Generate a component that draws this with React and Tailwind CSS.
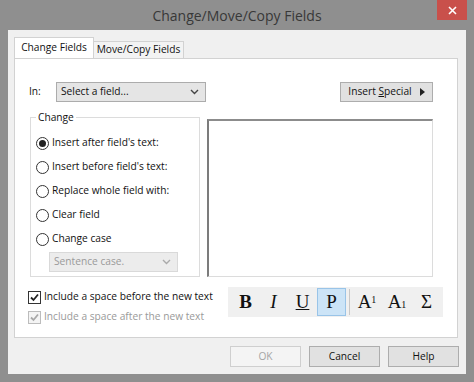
import React from "react";

const F = "font-['Open_Sans',sans-serif]";

function Radio({ checked, label }) {
  return (
    <div className="flex items-center h-[20px]">
      <span className="w-[13px] h-[13px] rounded-full border border-[#333] bg-white flex items-center justify-center">
        {checked && <span className="w-[7px] h-[7px] rounded-full bg-[#222]" />}
      </span>
      <span className="ml-[3px] text-[10.2px] text-[#111] whitespace-nowrap">{label}</span>
    </div>
  );
}

function Check({ disabled, label }) {
  const c = disabled ? "#a8a8a8" : "#222";
  return (
    <div className="flex items-center h-[20px]">
      <span
        className={
          "w-[13px] h-[13px] border flex items-center justify-center " +
          (disabled ? "border-[#bcbcbc] bg-[#f4f4f4]" : "border-[#333] bg-white")
        }
      >
        <svg width="11" height="11" viewBox="0 0 11 11">
          <path d="M2 5.5 L4.5 8 L9 2.5" fill="none" stroke={c} strokeWidth="1.8" />
        </svg>
      </span>
      <span className={"ml-[3px] text-[10.2px] whitespace-nowrap " + (disabled ? "text-[#9a9a9a]" : "text-[#111]")}>{label}</span>
    </div>
  );
}

function Chevron({ color }) {
  return (
    <svg width="9" height="6" viewBox="0 0 9 6">
      <path d="M1 1 L4.5 4.5 L8 1" fill="none" stroke={color} strokeWidth="1.4" />
    </svg>
  );
}

function Btn({ children, disabled }) {
  return (
    <div
      className={
        "w-[71px] h-[21px] flex items-center justify-center text-[10.2px] border " +
        (disabled
          ? "border-[#cfcfcf] bg-[#f4f4f4] text-[#a5a5a5]"
          : "border-[#adadad] bg-[#e1e1e1] text-[#111]")
      }
    >
      {children}
    </div>
  );
}

export default function App() {
  return (
    <div className={"w-[474px] h-[382px] bg-[#8f8f8f] flex flex-col px-[8px] pb-[8px] " + F}>
      <div className="relative h-[30px] flex items-center justify-center">
        <span className="text-[14px] text-[#383838]">Change/Move/Copy Fields</span>
        <div className="absolute top-0 right-[-1px] w-[30px] h-[20px] bg-[#c9504b] flex items-center justify-center">
          <svg width="9" height="9" viewBox="0 0 9 9">
            <path d="M1 1 L8 8 M8 1 L1 8" stroke="#fff" strokeWidth="1.6" />
          </svg>
        </div>
      </div>
      <div className="flex-1 bg-[#f0f0f0] flex flex-col pl-[6px] pr-[8px] pt-[8px]">
        <div className="flex items-end h-[20px] relative z-10">
          <div className="h-[21px] w-[80px] bg-white border border-[#d2d2d2] border-b-0 flex items-center justify-center text-[10.2px] text-[#111] whitespace-nowrap">
            Change Fields
          </div>
          <div className="h-[17px] w-[90px] bg-[#f3f3f3] border border-[#d2d2d2] border-l-0 border-b-0 flex items-center justify-center text-[10.2px] text-[#111] whitespace-nowrap">
            Move/Copy Fields
          </div>
        </div>
        <div className="h-[280px] bg-white border border-[#d2d2d2] flex flex-col px-[14px] pt-[23px]">
          <div className="flex items-center h-[20px]">
            <span className="text-[10.2px] text-[#111] w-[27px]">In:</span>
            <div className="w-[150px] h-[20px] bg-[#e5e5e5] border border-[#acacac] flex items-center justify-between pl-[4px] pr-[6px]">
              <span className="text-[10.2px] text-[#111]">Select a field...</span>
              <Chevron color="#444" />
            </div>
            <div className="flex-1" />
            <div className="w-[93px] h-[20px] bg-[#e1e1e1] border border-[#adadad] flex items-center justify-center mr-[10px] text-[10.2px] text-[#111]">
              <span>
                Insert <span className="underline">S</span>pecial
              </span>
              <svg className="ml-[8px]" width="5" height="8" viewBox="0 0 5 8">
                <path d="M0 0 L5 4 L0 8 Z" fill="#222" />
              </svg>
            </div>
          </div>
          <div className="flex mt-[15px] h-[160px]">
            <div className="relative ml-[1px] w-[170px] h-[160px] border border-[#dcdcdc] pl-[5px] pt-[15px] flex flex-col gap-[4px]">
              <span className="absolute top-[-9px] left-[5px] bg-white px-[2px] text-[10.2px] text-[#111] leading-[16px]">
                Change
              </span>
              <Radio checked label="Insert after field's text:" />
              <Radio label="Insert before field's text:" />
              <Radio label="Replace whole field with:" />
              <Radio label="Clear field" />
              <Radio label="Change case" />
              <div className="ml-[13px] mt-[-1px] w-[129px] h-[20px] bg-[#ececec] border border-[#d9d9d9] flex items-center justify-between pl-[4px] pr-[6px]">
                <span className="text-[10.2px] text-[#9a9a9a]">Sentence case.</span>
                <Chevron color="#aaa" />
              </div>
            </div>
            <div className="ml-[7px] mt-[2px] w-[226px] h-[158px] bg-white border-l-[2px] border-t-[2px] border-r border-b border-l-[#7c7c7c] border-t-[#8c8c8c] border-r-[#dcdcdc] border-b-[#dcdcdc]" />
          </div>
          <div className="flex mt-[10px]">
            <div className="flex flex-col ml-[-1px]">
              <Check label="Include a space before the new text" />
              <Check disabled label="Include a space after the new text" />
            </div>
            <div className="flex-1" />
            <div className="w-[215px] h-[30px] bg-[#f0f0f0] flex items-center pl-[4px] font-['Liberation_Serif',serif] text-[19px] text-[#111]">
              <div className="w-[27px] h-[28px] flex items-center justify-center font-bold">B</div>
              <div className="w-[29px] h-[28px] flex items-center justify-center italic">I</div>
              <div className="w-[29px] h-[28px] flex items-center justify-center underline">U</div>
              <div className="w-[29px] h-[28px] flex items-center justify-center bg-[#cce4f7] border border-[#99c4e8]">P</div>
              <div className="w-[1px] h-[26px] bg-[#c8c8c8] ml-[3px]" />
              <div className="w-[30px] h-[28px] flex items-center justify-center ml-[2px]">
                A<span className="text-[10px] self-start mt-[4px]">1</span>
              </div>
              <div className="w-[30px] h-[28px] flex items-center justify-center">
                A<span className="text-[10px] self-end mb-[4px]">1</span>
              </div>
              <div className="w-[29px] h-[28px] flex items-center justify-center">Σ</div>
            </div>
          </div>
        </div>
        <div className="flex justify-end gap-[8px] mt-[8px] mr-[-1px]">
          <Btn disabled>OK</Btn>
          <Btn>Cancel</Btn>
          <Btn>Help</Btn>
        </div>
      </div>
    </div>
  );
}
